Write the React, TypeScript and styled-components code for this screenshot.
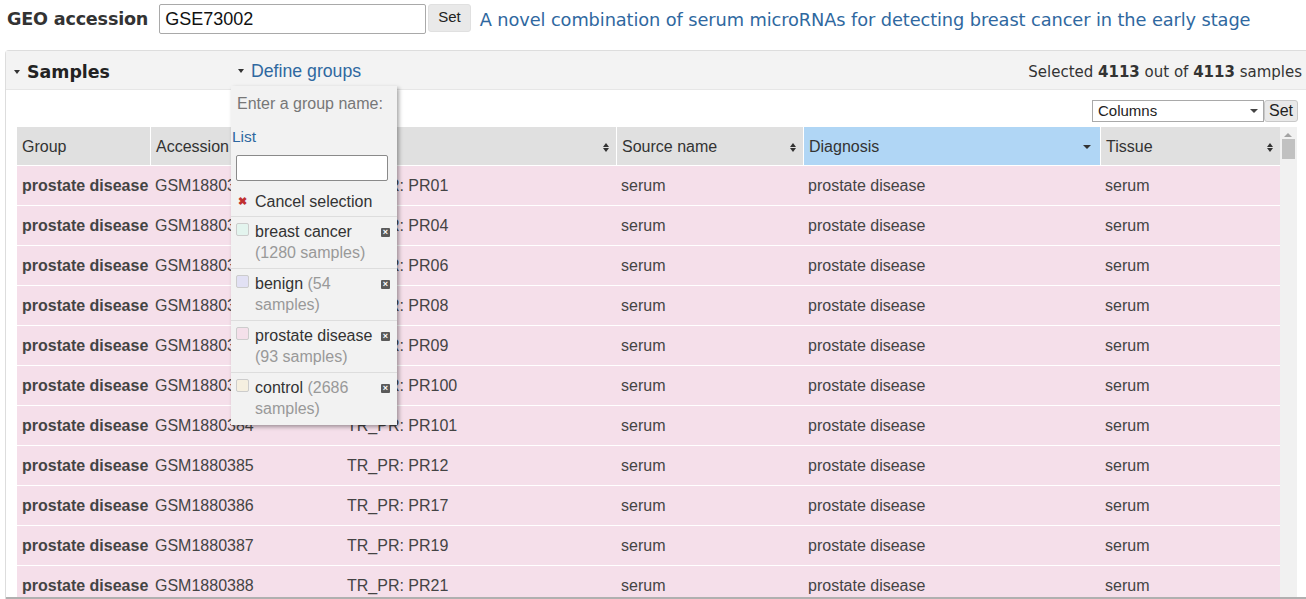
import React from 'react';
import styled, { createGlobalStyle } from 'styled-components';

const GlobalStyle = createGlobalStyle`
  html, body {
    margin: 0;
    padding: 0;
    overflow: hidden;
    background: #fff;
    font-family: 'Liberation Sans', Arial, sans-serif;
    color: #333;
  }
`;

const Page = styled.div`
  width: 1306px;
  height: 599px;
  overflow: hidden;
  position: relative;
`;

const TopBar = styled.div`
  display: flex;
  align-items: center;
  height: 36px;
  padding: 1px 0 0 7px;
`;

const TopLabel = styled.span`
  font-family: 'DejaVu Sans', Verdana, sans-serif;
  font-weight: 700;
  font-size: 17.6px;
  color: #333;
  margin-right: 11px;
  letter-spacing: -0.2px;
`;

const AccInput = styled.div`
  box-sizing: border-box;
  width: 267px;
  height: 30px;
  border: 1px solid #a9a9a9;
  border-radius: 2px;
  padding: 0 5px;
  font-size: 18px;
  line-height: 28px;
  color: #111;
`;

const GreyButton = styled.div<{ $small?: boolean }>`
  box-sizing: border-box;
  background: #e9e9e9;
  border: 1px solid ${(p) => (p.$small ? '#c8c8c8' : '#e0e0e0')};
  border-radius: 3px;
  color: #222;
  font-size: ${(p) => (p.$small ? '16px' : '15px')};
  padding: ${(p) => (p.$small ? '0 4px' : '0 9px')};
  height: ${(p) => (p.$small ? '22px' : '28px')};
  line-height: ${(p) => (p.$small ? '20px' : '24px')};
  margin-left: ${(p) => (p.$small ? '0' : '2px')};
  align-self: ${(p) => (p.$small ? 'auto' : 'flex-start')};
  margin-top: ${(p) => (p.$small ? '0' : '3px')};
`;

const TitleLink = styled.a`
  font-family: 'DejaVu Sans', Verdana, sans-serif;
  font-size: 17.8px;
  color: #2f68a0;
  margin-left: 9px;
  text-decoration: none;
  letter-spacing: -0.1px;
  white-space: nowrap;
`;

const Panel = styled.div`
  margin: 13px 0 0 5px;
  width: 1310px;
  border: 1px solid #ddd;
  border-radius: 4px 0 0 0;
  border-right: none;
`;

const PanelHeader = styled.div`
  position: relative;
  display: flex;
  align-items: center;
  height: 39px;
  background: #f3f3f3;
  border-bottom: 1px solid #e6e6e6;
  padding: 4px 0 0 8px;
  box-sizing: border-box;
`;

const Caret = styled.span`
  display: inline-block;
  width: 0;
  height: 0;
  border-left: 3px solid transparent;
  border-right: 3px solid transparent;
  border-top: 4px solid #333;
  margin-right: 7px;
  vertical-align: middle;
`;

const SamplesTitle = styled.div`
  font-family: 'DejaVu Sans', Verdana, sans-serif;
  font-weight: 700;
  font-size: 17.4px;
  color: #222;
  width: 224px;
  display: flex;
  align-items: center;
`;

const DefineGroups = styled.div`
  position: relative;
  font-size: 17.7px;
  color: #2f68a0;
  display: flex;
  align-items: center;
  margin-top: -2px;
`;

const Selected = styled.div`
  margin-left: auto;
  margin-right: 14px;
  font-family: 'DejaVu Sans', Verdana, sans-serif;
  font-size: 15px;
  color: #333;
  b {
    font-weight: 700;
  }
`;

const Popup = styled.div`
  position: absolute;
  top: 25px;
  left: -7px;
  width: 166px;
  background: #f2f2f2;
  box-shadow: 2px 2px 4px rgba(0, 0, 0, 0.35);
  z-index: 5;
  padding: 0 0 1px 0;
`;

const PopupHint = styled.div`
  color: #777;
  font-size: 16px;
  padding: 9px 0 0 6px;
  height: 28px;
`;

const PopupList = styled.div`
  color: #2f68a0;
  font-size: 15.5px;
  padding: 5px 0 0 1px;
  height: 27px;
`;

const PopupInput = styled.div`
  box-sizing: border-box;
  margin: 0 0 0 5px;
  width: 152px;
  height: 26px;
  background: #fff;
  border: 1px solid #8a8a8a;
  border-radius: 2px;
`;

const CancelRow = styled.div`
  display: flex;
  align-items: center;
  height: 36px;
  padding: 7px 0 0 7px;
  box-sizing: border-box;
  font-size: 16px;
  color: #333;
  border-bottom: 1px solid #ddd;
`;

const RedX = styled.span`
  color: #c03030;
  font-weight: 700;
  font-size: 11px;
  width: 17px;
`;

const GroupItem = styled.div`
  display: flex;
  align-items: flex-start;
  padding: 4px 6px 7px 5px;
  border-bottom: 1px solid #ddd;
  height: 40px;
  &:last-child {
    border-bottom: none;
  }
`;

const Swatch = styled.span<{ $c: string }>`
  flex: none;
  width: 11px;
  height: 11px;
  margin-top: 2px;
  border: 1px solid #ccc;
  border-radius: 2px;
  background: ${(p) => p.$c};
  margin-right: 6px;
`;

const GroupText = styled.div`
  flex: 1;
  font-size: 16px;
  line-height: 21px;
  color: #333;
  span {
    color: #999;
  }
`;

const CloseIcon = styled.span`
  flex: none;
  width: 9px;
  height: 9px;
  margin-top: 7px;
  margin-right: 1px;
  background: #5a5a5a;
  border-radius: 1px;
  color: #fff;
  font-size: 9px;
  line-height: 9px;
  text-align: center;
  font-weight: 700;
`;

const PanelBody = styled.div`
  padding: 10px 0 0 11px;
  height: 509px;
  box-sizing: border-box;
  border-bottom: 2px solid #b0b0b0;
  overflow: hidden;
`;

const ColumnsRow = styled.div`
  display: flex;
  justify-content: flex-end;
  width: 1281px;
  height: 23px;
  margin-bottom: 4px;
`;

const ColumnsSelect = styled.div`
  box-sizing: border-box;
  width: 172px;
  height: 22px;
  border: 1px solid #a9a9a9;
  background: #fff;
  font-size: 15px;
  line-height: 20px;
  padding-left: 5px;
  display: flex;
  align-items: center;
  justify-content: space-between;
  color: #222;
`;

const SmallDown = styled.span`
  width: 0;
  height: 0;
  border-left: 4px solid transparent;
  border-right: 4px solid transparent;
  border-top: 4px solid #444;
  margin-right: 5px;
`;

const TableWrap = styled.div`
  display: flex;
  align-items: flex-start;
`;

const Table = styled.table`
  border-collapse: separate;
  border-spacing: 0;
  table-layout: fixed;
  width: 1263px;
  font-size: 16px;
`;

const Th = styled.th<{ $w: number; $active?: boolean }>`
  width: ${(p) => p.$w}px;
  height: 38px;
  padding: 2px 5px 0;
  box-sizing: border-box;
  text-align: left;
  font-weight: 400;
  color: #333;
  background: ${(p) => (p.$active ? '#b0d6f5' : '#e0e0e0')};
  border-left: 1px solid #fff;
  &:first-child {
    border-left: none;
  }
`;

const ThInner = styled.div`
  display: flex;
  align-items: center;
  justify-content: space-between;
`;

const SortIcon = styled.span`
  display: inline-flex;
  flex-direction: column;
  gap: 1px;
  margin-right: 2px;
  i {
    display: block;
    width: 0;
    height: 0;
    border-left: 3.5px solid transparent;
    border-right: 3.5px solid transparent;
  }
  i:first-child {
    border-bottom: 4px solid #333;
  }
  i:last-child {
    border-top: 4px solid #333;
  }
`;

const DownOnly = styled.span`
  width: 0;
  height: 0;
  border-left: 4px solid transparent;
  border-right: 4px solid transparent;
  border-top: 4px solid #333;
  margin-right: 4px;
`;

const Tr = styled.tr`
  background: #f5dfea;
`;

const Td = styled.td<{ $bold?: boolean }>`
  height: 40px;
  box-sizing: border-box;
  padding: 1px 5px 0;
  border-top: 1px solid #fff;
  color: #444;
  font-weight: ${(p) => (p.$bold ? 700 : 400)};
  white-space: nowrap;
  overflow: hidden;
`;

const ScrollTrack = styled.div`
  width: 17px;
  background: #f1f1f1;
  position: relative;
  height: 480px;
`;

const ScrollUp = styled.span`
  position: absolute;
  top: 6px;
  left: 4px;
  width: 0;
  height: 0;
  border-left: 4px solid transparent;
  border-right: 4px solid transparent;
  border-bottom: 4px solid #a3a3a3;
`;

const ScrollThumb = styled.div`
  position: absolute;
  top: 12px;
  left: 2px;
  width: 13px;
  height: 20px;
  background: #c1c1c1;
`;

const groups = [
  { name: 'breast cancer', count: '(1280 samples)', color: '#e3f4ee', wrap: true },
  { name: 'benign', count: '(54 samples)', color: '#e2e1f4', wrap: false },
  { name: 'prostate disease', count: '(93 samples)', color: '#f4e0ea', wrap: true },
  { name: 'control', count: '(2686 samples)', color: '#f5efe0', wrap: false },
];

const titles = ['PR01', 'PR04', 'PR06', 'PR08', 'PR09', 'PR100', 'PR101', 'PR12', 'PR17', 'PR19', 'PR21'];

const columns = [
  { label: 'Group', w: 133, sort: 'none' },
  { label: 'Accession', w: 192, sort: 'both' },
  { label: 'Title', w: 274, sort: 'both' },
  { label: 'Source name', w: 187, sort: 'both' },
  { label: 'Diagnosis', w: 297, sort: 'down' },
  { label: 'Tissue', w: 180, sort: 'both' },
];

export default function App() {
  return (
    <Page>
      <GlobalStyle />
      <TopBar>
        <TopLabel>GEO accession</TopLabel>
        <AccInput>GSE73002</AccInput>
        <GreyButton>Set</GreyButton>
        <TitleLink>A novel combination of serum microRNAs for detecting breast cancer in the early stage</TitleLink>
      </TopBar>
      <Panel>
        <PanelHeader>
          <SamplesTitle>
            <Caret />
            Samples
          </SamplesTitle>
          <DefineGroups>
            <Caret />
            Define groups
            <Popup>
              <PopupHint>Enter a group name:</PopupHint>
              <PopupList>List</PopupList>
              <PopupInput />
              <CancelRow>
                <RedX>✖</RedX>
                Cancel selection
              </CancelRow>
              {groups.map((g) => (
                <GroupItem key={g.name}>
                  <Swatch $c={g.color} />
                  <GroupText>
                    {g.name}
                    {g.wrap ? <br /> : ' '}
                    <span>{g.count}</span>
                  </GroupText>
                  <CloseIcon>×</CloseIcon>
                </GroupItem>
              ))}
            </Popup>
          </DefineGroups>
          <Selected>
            Selected <b>4113</b> out of <b>4113</b> samples
          </Selected>
        </PanelHeader>
        <PanelBody>
          <ColumnsRow>
            <ColumnsSelect>
              Columns
              <SmallDown />
            </ColumnsSelect>
            <GreyButton $small>Set</GreyButton>
          </ColumnsRow>
          <TableWrap>
            <Table>
              <thead>
                <tr>
                  {columns.map((c) => (
                    <Th key={c.label} $w={c.w} $active={c.sort === 'down'}>
                      <ThInner>
                        {c.label}
                        {c.sort === 'both' && (
                          <SortIcon>
                            <i />
                            <i />
                          </SortIcon>
                        )}
                        {c.sort === 'down' && <DownOnly />}
                      </ThInner>
                    </Th>
                  ))}
                </tr>
              </thead>
              <tbody>
                {titles.map((t, i) => (
                  <Tr key={t}>
                    <Td $bold>prostate disease</Td>
                    <Td>GSM{1880378 + i}</Td>
                    <Td>TR_PR: {t}</Td>
                    <Td>serum</Td>
                    <Td>prostate disease</Td>
                    <Td>serum</Td>
                  </Tr>
                ))}
              </tbody>
            </Table>
            <ScrollTrack>
              <ScrollUp />
              <ScrollThumb />
            </ScrollTrack>
          </TableWrap>
        </PanelBody>
      </Panel>
    </Page>
  );
}
